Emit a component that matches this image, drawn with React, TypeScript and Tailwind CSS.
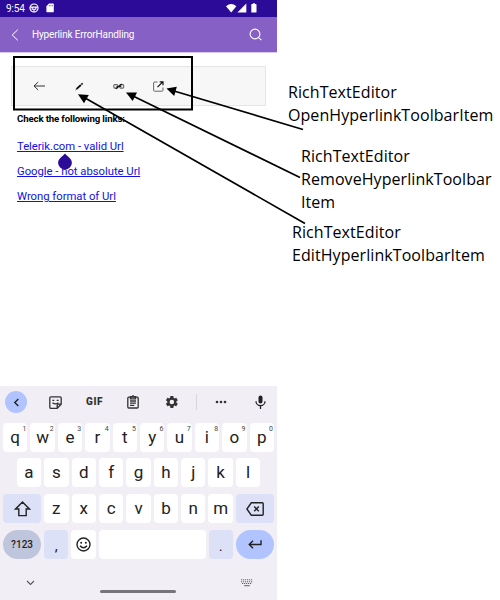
import React from "react";

const KEY = "flex items-center justify-center relative rounded-[4px] h-[29px] bg-white text-[17px] leading-none";

function Key({ label, hint }: { label: string; hint?: string }) {
  return (
    <div className={`${KEY} w-[24.4px]`}>
      <span>{label}</span>
      {hint && <span className="absolute right-px top-[3px] text-[7px] leading-[7px] text-[#444]">{hint}</span>}
    </div>
  );
}

function StatusBar() {
  return (
    <div className="flex h-[17px] items-center bg-[#2b0b98] pl-[6px] pr-[19px] text-white">
      <span className="w-[23px] text-[10px] leading-none tracking-[-0.1px]">9:54</span>
      <svg className="-mt-px mr-[7px]" width="10" height="10" viewBox="0 0 10 10" fill="none" stroke="white">
        <circle cx="5" cy="5" r="4" strokeWidth="1.2" />
        <path d="M1.3 4.1h7.4M3.2 4.2v2h3.6v-2M5 6.2v3" strokeWidth="1.1" />
      </svg>
      <svg className="-mt-px" width="8" height="10" viewBox="0 0 8 10">
        <path d="M3 .5h4.2q.6 0 .6.6v7.5q0 .6-.6.6H1q-.6 0-.6-.6V3.2z" fill="white" />
        <path d="M3.3 2v1.3M4.9 2v1.3M6.4 2v1.3" stroke="#2b0b98" strokeWidth=".6" />
      </svg>
      <svg className="ml-auto" width="32" height="11" viewBox="0 0 32 11" fill="white">
        <path d="M0 3.2Q5.2-1 10.4 3.2L5.2 9.5z" />
        <path d="M20.3.6v8.9h-8.9z" />
        <path d="M25.3 1.7q0-.6.6-.6h1V.2h2v.9h1q.6 0 .6.6v7.2q0 .6-.6.6h-4q-.6 0-.6-.6z" />
      </svg>
    </div>
  );
}

function Header() {
  return (
    <div className="flex h-[36px] items-center border-b border-[#d9cbed] bg-[#8760c5] pl-[11px] pr-[15px] text-white">
      <svg width="8" height="12" viewBox="0 0 8 12" fill="none" stroke="white" strokeWidth="1">
        <path d="M6.8.7 1.2 6l5.6 5.3" />
      </svg>
      <span className="ml-[13px] text-[10px] leading-none tracking-[-0.13px]">Hyperlink ErrorHandling</span>
      <svg className="ml-auto" width="13" height="13" viewBox="0 0 13 13" fill="none" stroke="white" strokeWidth="1.1">
        <circle cx="6" cy="6" r="4.9" />
        <path d="m9.6 9.6 2.8 2.6" />
      </svg>
    </div>
  );
}

function Toolbar() {
  return (
    <div className="ml-[11px] mt-[13px] flex h-[40px] w-[255px] items-center border border-[#e5e5e5] bg-[#f7f7f7]">
      <svg className="ml-[21px]" width="13" height="10" viewBox="0 0 13 10" fill="none" stroke="#333" strokeWidth="1">
        <path d="M12 5H1M5.2 1 1 5l4.2 4" />
      </svg>
      <svg className="ml-[29px]" width="9" height="9" viewBox="0 0 9 9" fill="none" stroke="#0a0a0a">
        <path d="M1.6 6.9 5.9 3" strokeWidth="1.7" />
        <path d="M6.4 2.5 7.7 1.3" strokeWidth="1.7" />
        <path d="M.6 7.9 2 6.6" strokeWidth=".9" />
      </svg>
      <svg className="ml-[29px]" width="12" height="9" viewBox="0 0 12 9" fill="none" stroke="#666" strokeWidth="1.1">
        <rect x=".8" y="2.6" width="4" height="3.5" rx="1" />
        <rect x="6.7" y="2.6" width="4" height="3.5" rx="1" />
        <path d="M3.4 4.5h5" stroke="#333" />
        <path d="M2.8 6.8 8.8 2" stroke="#111" strokeWidth="1.2" />
      </svg>
      <svg className="ml-[28px]" width="11" height="11" viewBox="0 0 11 11" fill="none" stroke="#666" strokeWidth="1">
        <path d="M4.5 1H1.5Q.6 1 .6 2v7.3q0 .9.9.9h7.6q.9 0 .9-.9V6.5" />
        <path d="M6.7.8H10v3.4M9.5 1.2 4.5 6.2" stroke="#111" strokeWidth="1.2" />
      </svg>
    </div>
  );
}

function Links() {
  return (
    <div className="pl-[17px] pt-[6px] text-black">
      <div className="h-[14px] text-[9.7px] font-bold leading-[14px] tracking-[-0.16px]">Check the following links:</div>
      <div className="mt-[8px] flex flex-col text-[11.3px] leading-[25px] text-[#1310e6] underline underline-offset-1">
        <span className="tracking-[-0.03px]">Telerik.com - valid Url</span>
        <span className="tracking-[-0.02px]">Google - not absolute Url</span>
        <span className="tracking-[-0.02px]">Wrong format of Url</span>
      </div>
    </div>
  );
}

function Keyboard() {
  return (
    <div className="flex h-[214px] flex-col bg-[#f1eef5] text-[#222]">
      <div className="flex h-[32px] items-center pl-[5px]">
        <span className="flex h-[22px] w-[22px] items-center justify-center rounded-full bg-[#b1c4ff]">
          <svg width="7" height="9" viewBox="0 0 7 9" fill="none" stroke="#222" strokeWidth="1.4"><path d="M5.3 1 1.8 4.5 5.3 8" /></svg>
        </span>
        <svg className="ml-[22px]" width="13" height="13" viewBox="0 0 13 13" fill="none" stroke="#333" strokeWidth="1.3">
          <path d="M2 .8h9q1.2 0 1.2 1.2v6.3l-4 4H2Q.8 12.3.8 11V2Q.8.8 2 .8zM12 8.2H9.4q-1.2 0-1.2 1.2V12" />
          <path d="M3.4 4.3h1.9M7.7 4.3h1.9" />
          <path d="M3.5 6.7q3 2.5 6 0" />
        </svg>
        <span className="ml-[24px] w-[17px] whitespace-nowrap text-[10px] font-black leading-none tracking-[0.6px] text-[#333]">GIF</span>
        <svg className="ml-[24px]" width="12" height="14" viewBox="0 0 12 14" fill="none" stroke="#333" strokeWidth="1.3">
          <rect x=".8" y="2.2" width="10.4" height="10.8" rx="1" />
          <path d="M3.5 1.6h5v2.2h-5zM3 6h6M3 8.2h6M3 10.4h4.3M6 0v2" />
        </svg>
        <svg className="ml-[26px]" width="14" height="14" viewBox="0 0 24 24" fill="#333">
          <path fillRule="evenodd" d="M19.4 13a7.8 7.8 0 0 0 0-2l2.2-1.7c.2-.2.2-.4.1-.7l-2.1-3.6c-.1-.2-.4-.3-.6-.2l-2.6 1a8 8 0 0 0-1.7-1L14.3 2c0-.2-.2-.4-.5-.4H9.7c-.3 0-.5.2-.5.4l-.4 2.8a8 8 0 0 0-1.7 1l-2.6-1c-.2-.1-.5 0-.6.2L1.8 8.6c-.1.3-.1.5.1.7L4.1 11a7.8 7.8 0 0 0 0 2l-2.2 1.7c-.2.2-.2.4-.1.7L3.9 19c.1.2.4.3.6.2l2.6-1a8 8 0 0 0 1.7 1l.4 2.8c0 .2.2.4.5.4h4.1c.3 0 .5-.2.5-.4l.4-2.8a8 8 0 0 0 1.7-1l2.6 1c.2.1.5 0 .6-.2l2.1-3.6c.1-.3.1-.5-.1-.7zM11.75 15.9a3.9 3.9 0 1 1 0-7.8 3.9 3.9 0 0 1 0 7.8z" />
        </svg>
        <span className="ml-[17px] h-[16px] w-px bg-[#d8d6dd]" />
        <svg className="ml-[18px]" width="12" height="4" viewBox="0 0 12 4" fill="#333">
          <circle cx="2" cy="2" r="1.3" /><circle cx="6" cy="2" r="1.3" /><circle cx="10" cy="2" r="1.3" />
        </svg>
        <svg className="ml-[28px]" width="11" height="14" viewBox="0 0 11 14" fill="none" stroke="#222" strokeWidth="1.3">
          <rect x="3.5" y=".4" width="4" height="8" rx="2" fill="#222" stroke="none" />
          <path d="M1 6.2a4.5 4.5 0 0 0 9 0M5.5 10.6V14" />
        </svg>
      </div>
      <div className="mt-[4.5px] flex flex-col gap-[6.8px] px-[3px]">
        <div className="flex gap-[3px]">
          {"qwertyuiop".split("").map((c, i) => <Key key={c} label={c} hint={String((i + 1) % 10)} />)}
        </div>
        <div className="flex justify-center gap-[3px]">
          {"asdfghjkl".split("").map((c) => <Key key={c} label={c} />)}
        </div>
        <div className="flex gap-[3px]">
          <div className="flex h-[29px] flex-1 items-center justify-center rounded-[4px] bg-[#dce1f8]">
            <svg width="17" height="16" viewBox="0 0 17 16" fill="none" stroke="#222" strokeWidth="1.4"><path d="M8.5 1.1 1.6 8h3.2v6.6h7.4V8h3.2z" /></svg>
          </div>
          {"zxcvbnm".split("").map((c) => <Key key={c} label={c} />)}
          <div className="flex h-[29px] flex-1 items-center justify-center rounded-[4px] bg-[#dce1f8]">
            <svg width="18" height="14" viewBox="0 0 18 14" fill="none" stroke="#222" strokeWidth="1.4"><path d="M5.3.8h11q.9 0 .9.9v10.6q0 .9-.9.9h-11L.9 7zM8.2 4.6l4.6 4.6M12.8 4.6 8.2 9.2" /></svg>
          </div>
        </div>
        <div className="flex gap-[3px]">
          <div className="flex h-[29px] w-[38.1px] items-center justify-center rounded-full bg-[#c0c5de] pt-px text-[10px] font-medium leading-none">?123</div>
          <div className="flex h-[29px] w-[24.4px] items-center justify-center rounded-[4px] bg-[#dce1f8] pt-[4px] text-[15px] leading-none">,</div>
          <div className="flex h-[29px] w-[24.4px] items-center justify-center rounded-[4px] bg-white">
            <svg width="15" height="15" viewBox="0 0 15 15" fill="none" stroke="#222" strokeWidth="1.4">
              <circle cx="7.5" cy="7.5" r="6.5" />
              <path d="M4 8.8q3.5 4 7 0" />
              <circle cx="5.2" cy="5.7" r="1" fill="#222" stroke="none" /><circle cx="9.8" cy="5.7" r="1" fill="#222" stroke="none" />
            </svg>
          </div>
          <div className="h-[29px] flex-1 rounded-[4px] bg-white" />
          <div className="flex h-[29px] w-[24.4px] items-center justify-center rounded-[4px] bg-[#dce1f8] pt-[4px] text-[15px] leading-none">.</div>
          <div className="flex h-[29px] w-[38.1px] items-center justify-center rounded-full bg-[#b1c4ff]">
            <svg width="14" height="10" viewBox="0 0 14 10" fill="none" stroke="#222" strokeWidth="1.4"><path d="M13 1.3v4.2H1.3M5 1.7 1.2 5.5 5 9.3" /></svg>
          </div>
        </div>
      </div>
      <div className="mt-auto flex h-[36px] pl-[26px] pr-[24px]">
        <svg className="mt-[16px]" width="9" height="6" viewBox="0 0 9 6" fill="none" stroke="#555" strokeWidth="1.1"><path d="m1 1 3.5 3.5L8 1" /></svg>
        <span className="ml-[65px] mt-[26px] h-[3px] w-[76px] rounded-full bg-[#77757b]" />
        <svg className="ml-auto mt-[15px]" width="12" height="8" viewBox="0 0 12 8" fill="none" stroke="#666" strokeWidth="1">
          <path d="M0 .8h12M0 2.8h12M1 4.5h10" strokeDasharray="1.2 .8" /><path d="M3.2 6.7h5.6" />
        </svg>
      </div>
    </div>
  );
}

function Annotations() {
  return (
    <svg className="pointer-events-none absolute left-0 top-0" width="500" height="600" viewBox="0 0 500 600" fill="none" stroke="black">
      <path d="M65 153.5c2 3 6.9 4.8 6.9 9.2a6.9 6.9 0 0 1-13.8 0c0-4.4 4.9-6.2 6.9-9.2z" fill="#2b0b98" stroke="none" />
      <rect x="14" y="57" width="178" height="52.5" strokeWidth="2" />
      <path d="M303 129.5 174 91M300 177.5 134 96.5M305 223.5 86 98.5" strokeWidth="1.7" />
      <g fill="black" stroke="none">
        <path d="m166.5 88.5 10.3-1.7-2.6 9.2z" />
        <path d="m126 92.5 11-.1-4.3 8.5z" />
        <path d="m78 94.2 10.8.8-4.8 8.3z" />
      </g>
    </svg>
  );
}

const NOTE = "font-['Open_Sans','Noto_Sans',sans-serif] text-[16px] leading-[23px] tracking-[0.07px] text-black whitespace-nowrap";

export default function App() {
  return (
    <div className="relative flex h-[600px] w-[500px] overflow-hidden bg-white font-[Roboto,sans-serif]">
      <div className="flex w-[277px] flex-col">
        <StatusBar />
        <Header />
        <Toolbar />
        <Links />
        <div className="mt-auto"><Keyboard /></div>
      </div>
      <div className="flex flex-col pl-[11px] pt-[81px]">
        <div className={NOTE}>RichTextEditor<br />OpenHyperlinkToolbarItem</div>
        <div className={`${NOTE} ml-[13px] mt-[18px]`}>RichTextEditor<br />RemoveHyperlinkToolbar<br />Item</div>
        <div className={`${NOTE} ml-[4px] mt-[7px]`}>RichTextEditor<br />EditHyperlinkToolbarItem</div>
      </div>
      <Annotations />
    </div>
  );
}
